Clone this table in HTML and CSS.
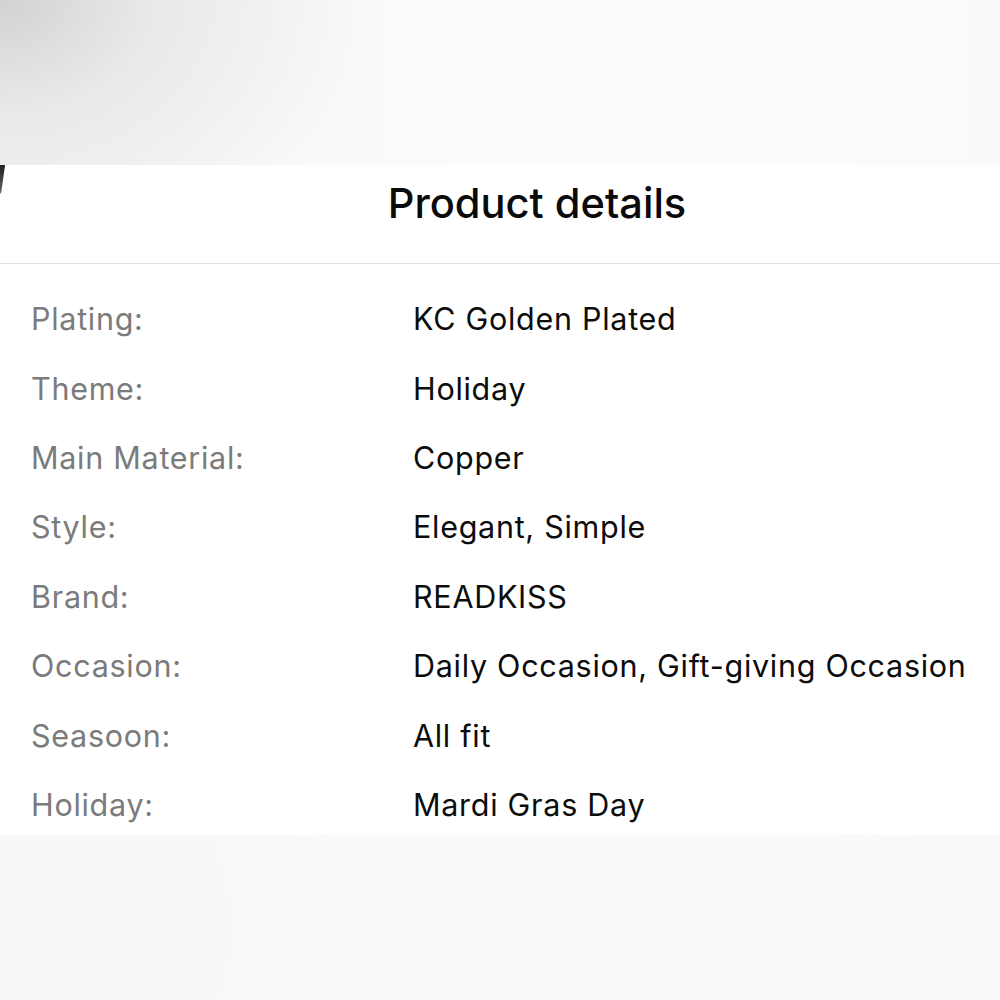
FILE: index.html
```html
<!DOCTYPE html>
<html>
<head>
<meta charset="utf-8">
<link rel="stylesheet" href="styles.css">
</head>
<body>
<div class="page">
  <div class="top-bg"></div>
  <div class="panel">
    <div class="corner"></div>
    <div class="header"><h1 class="title">Product details</h1></div>
    <div class="list">
      <div class="row"><span class="label">Plating:</span><span class="value">KC Golden Plated</span></div>
      <div class="row"><span class="label">Theme:</span><span class="value">Holiday</span></div>
      <div class="row"><span class="label">Main Material:</span><span class="value">Copper</span></div>
      <div class="row"><span class="label">Style:</span><span class="value">Elegant, Simple</span></div>
      <div class="row"><span class="label">Brand:</span><span class="value">READKISS</span></div>
      <div class="row"><span class="label">Occasion:</span><span class="value">Daily Occasion, Gift-giving Occasion</span></div>
      <div class="row"><span class="label">Seasoon:</span><span class="value">All fit</span></div>
      <div class="row"><span class="label">Holiday:</span><span class="value">Mardi Gras Day</span></div>
    </div>
  </div>
  <div class="bottom-bg"></div>
</div>
</body>
</html>
```
FILE: styles.css
```css
html, body {
  margin: 0;
  padding: 0;
  background: #f9f9f9;
}
.page {
  width: 1000px;
  height: 1000px;
  display: flex;
  flex-direction: column;
  overflow: hidden;
  font-family: Inter, "Noto Sans", "Liberation Sans", sans-serif;
}
.top-bg {
  height: 165px;
  flex: none;
  background:
    radial-gradient(ellipse 380px 280px at 0 0, #d2d2d2 0%, #e9e9e9 40%, rgba(247,247,247,0) 100%),
    linear-gradient(90deg, #f7f7f7 0%, #fcfcfc 60%, #fafafa 100%);
}
.panel {
  position: relative;
  height: 670px;
  flex: none;
  background: #fff;
  overflow: hidden;
}
.corner {
  position: absolute;
  left: -3px;
  top: 0;
  width: 6px;
  height: 30px;
  background: linear-gradient(180deg, #222 0%, #666 100%);
  border-radius: 0 0 4px 0;
  transform: skewX(-8deg);
}
.header {
  height: 76px;
  padding-bottom: 22px;
  border-bottom: 1px solid #e2e2e2;
  display: flex;
  align-items: center;
  justify-content: center;
  padding-left: 74px;
}
.title {
  margin: 0;
  font-size: 41.6px;
  font-weight: 500;
  color: #0a0a0a;
}
.list {
  padding-top: 20px;
}
.row {
  display: flex;
  height: 69.4px;
  align-items: center;
  font-size: 30.5px;
  letter-spacing: 0.72px;
}
.label {
  width: 382px;
  padding-left: 31px;
  flex: none;
  color: #7b7b7b;
}
.value {
  color: #0c0c0c;
}
.bottom-bg {
  flex: 1;
  background:
    radial-gradient(circle 220px at 110px 90px, #f7f7f7 0%, rgba(250,250,250,0) 100%),
    linear-gradient(90deg, #f8f8f8, #fafafa 50%, #f9f9f9);
}
```
